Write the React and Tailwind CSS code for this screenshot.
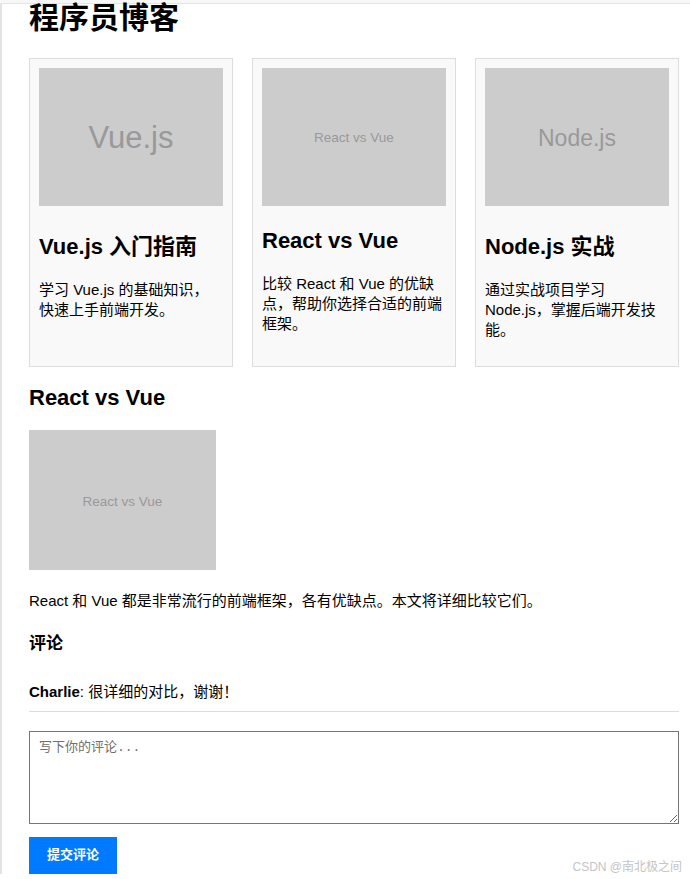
import React, { useState } from 'react';

const posts = [
  {
    id: 1,
    title: 'Vue.js 入门指南',
    summary: '学习 Vue.js 的基础知识，快速上手前端开发。',
    cover: 'Vue.js',
    coverSize: 'text-[31px]',
    cjkTitle: true,
  },
  {
    id: 2,
    title: 'React vs Vue',
    summary: '比较 React 和 Vue 的优缺点，帮助你选择合适的前端框架。',
    cover: 'React vs Vue',
    coverSize: 'text-[13.5px]',
    cjkTitle: false,
  },
  {
    id: 3,
    title: 'Node.js 实战',
    summary: '通过实战项目学习 Node.js，掌握后端开发技能。',
    cover: 'Node.js',
    coverSize: 'text-[23px]',
    cjkTitle: true,
  },
];

const initialComments = [{ id: 1, author: 'Charlie', text: '很详细的对比，谢谢！' }];

function PostCard({ post }) {
  return (
    <div className="border border-[#dddddd] bg-[#f9f9f9] p-[9px]">
      <div className={`flex h-[138px] w-full items-center justify-center pt-[3px] bg-[#cccccc] text-[#999999] ${post.coverSize}`}>
        {post.cover}
      </div>
      <h2 className={`mt-[22px] mb-[21px] text-[22px] font-bold leading-[25px] ${post.cjkTitle ? 'pt-[6px]' : ''}`}>
        {post.title}
      </h2>
      <p className="mb-[17px] text-[15px] leading-[20px]">{post.summary}</p>
    </div>
  );
}

export default function App() {
  const [comments] = useState(initialComments);
  const [draft, setDraft] = useState('');
  const current = posts[1];

  return (
    <div className="relative min-h-screen bg-white font-['Liberation_Sans','Noto_Sans_CJK_SC',sans-serif] text-black">
      <div className="h-[3px] bg-[#f7f7f7]" />
      <div className="border-t border-l-2 border-[#e4e4e4] pl-[27px]">
        <div className="w-[650px]">
          <h1 className="pt-px text-[30px] font-bold leading-[26px]">程序员博客</h1>

          <div className="mt-[27px] grid grid-cols-3 gap-[19px]">
            {posts.map((post) => (
              <PostCard key={post.id} post={post} />
            ))}
          </div>

          {/* article detail */}
          <h2 className="mt-[14px] text-[22px] font-bold leading-normal">{current.title}</h2>
          <div className="mt-[16px] flex h-[140px] w-[187px] items-center justify-center pt-[5px] bg-[#cccccc] text-[13.5px] text-[#999999]">
            {current.cover}
          </div>
          <p className="mt-[21px] text-[15px] leading-[20px]">
            React 和 Vue 都是非常流行的前端框架，各有优缺点。本文将详细比较它们。
          </p>

          <h3 className="mt-[20px] text-[17px] font-bold leading-normal">评论</h3>
          {comments.map((c) => (
            <div key={c.id} className="mt-[25px] border-b border-[#dddddd] pb-[9px] text-[15px] leading-[20px]">
              <strong>{c.author}</strong>: {c.text}
            </div>
          ))}

          <textarea
            value={draft}
            onChange={(e) => setDraft(e.target.value)}
            placeholder="写下你的评论..."
            className="mt-[19px] block h-[93px] w-full border border-[#767676] px-[9px] py-[6px] font-['Liberation_Mono','Noto_Sans_CJK_SC',monospace] text-[13px] outline-none placeholder:text-[#6f6f6f]"
          />
          <button className="mt-[13px] flex h-[37px] w-[88px] items-center justify-center bg-[#007bff] text-[13px] font-bold text-white">
            提交评论
          </button>
        </div>
      </div>

      <span className="absolute right-[8px] bottom-[3px] text-[12px] text-[#c4c4c4]">CSDN @南北极之间</span>
    </div>
  );
}
